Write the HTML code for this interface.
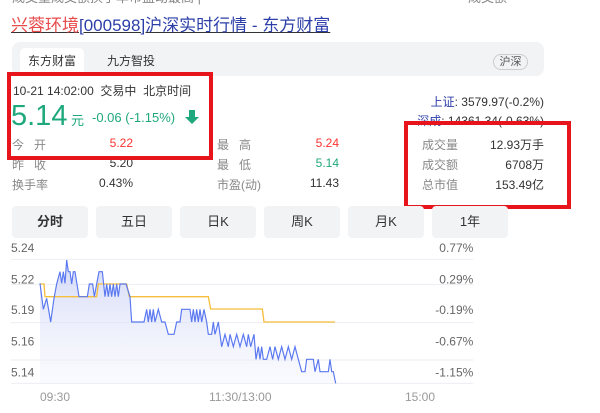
<!DOCTYPE html>
<html><head><meta charset="utf-8"><style>
*{margin:0;padding:0;box-sizing:border-box}
body{width:600px;height:413px;background:#fff;font-family:"Liberation Sans","Noto Sans CJK SC",sans-serif;position:relative;overflow:hidden;color:#333}
.a{position:absolute;white-space:nowrap}
.btn{position:absolute;top:206px;height:32px;width:76px;background:#f2f3f5;border-radius:4px;font-size:13px;text-align:center;line-height:32px;color:#333}
.box{position:absolute;border:4px solid #e8141b}
.lab{font-size:12px;color:#888}
.v{font-size:12px;text-align:right}
</style></head><body>
<div class="a" style="top:-13px;left:12px;font-size:13px;color:#888">成交量成交额换手率市盈动最高 | ·</div>
<div class="a" style="top:-13px;left:468px;font-size:13px;color:#888">成交额·</div>
<div class="a" style="top:11px;left:11px;font-size:17px;text-decoration:underline"><span style="color:#e84b4b">兴蓉环境</span><span style="color:#2c3fa8">[000598]沪深实时行情 - 东方财富</span></div>
<div class="a" style="top:42px;left:12px;width:532px;height:34px;background:#f2f3f5;border-radius:8px"></div>
<div class="a" style="top:48px;left:20px;width:64px;height:26px;background:#fff;border-radius:5px 5px 0 0;font-size:12px;line-height:26px;text-align:center">东方财富</div>
<div class="a" style="top:48px;left:107px;font-size:12px;line-height:26px">九方智投</div>
<div class="a" style="top:54px;left:493px;width:35px;height:16px;border:1px solid #ccc;border-radius:8px;font-size:11px;line-height:14px;text-align:center;color:#555">沪深</div>
<div class="a" style="top:82px;left:13px;font-size:12px">10-21 14:02:00&nbsp; 交易中&nbsp; 北京时间</div>
<div class="a" style="top:100px;left:11px;font-size:29px;color:#1fa87c;line-height:32px">5.14</div>
<div class="a" style="top:110px;left:71px;font-size:13px;color:#1fa87c">元</div>
<div class="a" style="top:110px;left:92px;font-size:13px;color:#1fa87c">-0.06 (-1.15%)</div>
<svg class="a" style="top:109px;left:185px" width="14" height="16" viewBox="0 0 14 16"><path d="M4 1h6v7h4l-7 7-7-7h4z" fill="#1fa87c"/></svg>
<div class="a lab" style="top:136px;left:12px">今&nbsp;&nbsp;&nbsp;开</div>
<div class="a lab" style="top:156px;left:12px">昨&nbsp;&nbsp;&nbsp;收</div>
<div class="a lab" style="top:176px;left:12px">换手率</div>
<div class="a v" style="top:136px;left:80px;width:53px;color:#f33">5.22</div>
<div class="a v" style="top:156px;left:80px;width:53px">5.20</div>
<div class="a v" style="top:176px;left:80px;width:53px">0.43%</div>
<div class="a lab" style="top:136px;left:217px">最&nbsp;&nbsp;&nbsp;高</div>
<div class="a lab" style="top:156px;left:217px">最&nbsp;&nbsp;&nbsp;低</div>
<div class="a lab" style="top:176px;left:217px">市盈(动)</div>
<div class="a v" style="top:136px;left:280px;width:59px;color:#f33">5.24</div>
<div class="a v" style="top:156px;left:280px;width:59px;color:#1fa87c">5.14</div>
<div class="a v" style="top:176px;left:280px;width:59px">11.43</div>
<div class="a" style="top:93px;right:56px;font-size:12px"><span style="color:#2c3fa8">上证</span>: 3579.97(-0.2%)</div>
<div class="a" style="top:112px;right:56px;font-size:12px"><span style="color:#2c3fa8">深成</span>: 14361.34(-0.63%)</div>
<div class="a lab" style="top:136px;left:422px">成交量</div>
<div class="a lab" style="top:156px;left:422px">成交额</div>
<div class="a lab" style="top:176px;left:422px">总市值</div>
<div class="a v" style="top:136px;left:470px;width:74px">12.93万手</div>
<div class="a v" style="top:156px;left:470px;width:74px">6708万</div>
<div class="a v" style="top:176px;left:470px;width:74px">153.49亿</div>
<div class="box" style="left:7px;top:72px;width:206px;height:88px"></div>
<div class="box" style="left:404px;top:121px;width:167px;height:88px"></div>
<div class="btn" style="left:12px;font-weight:bold">分时</div>
<div class="btn" style="left:96px">五日</div>
<div class="btn" style="left:180px">日K</div>
<div class="btn" style="left:264px">周K</div>
<div class="btn" style="left:348px">月K</div>
<div class="btn" style="left:432px">1年</div>
<svg class="a" style="left:0;top:200px" width="600" height="213" viewBox="0 0 1800 639">
<defs><linearGradient id="gr" x1="0" y1="0" x2="0" y2="1"><stop offset="0" stop-color="#c9d0f5" stop-opacity=".8"/><stop offset="1" stop-color="#eef0fc" stop-opacity=".3"/></linearGradient></defs>
<g stroke="#eceef2" stroke-width="3"><line x1="33" y1="178" x2="1420" y2="178"/><line x1="33" y1="253" x2="1420" y2="253"/><line x1="33" y1="368" x2="1420" y2="368"/><line x1="33" y1="480" x2="1420" y2="480"/><line x1="33" y1="550" x2="1420" y2="550"/></g>
<g font-size="36" fill="#666" font-family="Liberation Sans"><text x="33" y="156">5.24</text><text x="33" y="250">5.22</text><text x="33" y="342">5.19</text><text x="33" y="436">5.16</text><text x="33" y="530">5.14</text>
<g text-anchor="end"><text x="1420" y="156">0.77%</text><text x="1420" y="250">0.29%</text><text x="1420" y="342">-0.19%</text><text x="1420" y="436">-0.67%</text><text x="1420" y="530">-1.15%</text></g>
<g fill="#999"><text x="120" y="603">09:30</text><text x="627" y="603">11:30/13:00</text><text x="1215" y="603">15:00</text></g></g>
<polygon fill="url(#gr)" points="120,250 130,328 140,295 152,366 162,295 170,252 180,215 185,250 190,215 195,250 200,180 205,215 210,215 215,252 220,215 225,215 237,290 262,290 268,252 278,252 283,290 290,252 297,215 307,215 315,290 320,252 325,290 330,252 335,290 340,252 345,290 350,252 355,290 360,252 378,252 390,290 395,366 432,366 440,328 445,366 450,328 455,366 460,328 465,366 475,328 485,366 495,366 505,403 522,403 530,366 540,366 545,328 570,328 575,366 580,328 585,366 590,328 595,366 600,328 605,366 612,328 620,366 625,403 635,403 640,366 645,403 655,366 665,440 675,403 685,440 690,403 700,440 710,403 720,440 730,403 740,440 745,403 752,440 762,403 768,478 775,440 780,478 785,440 790,478 800,478 810,440 818,478 825,440 835,478 845,440 855,478 865,440 875,478 885,440 895,478 905,515 915,515 920,478 940,478 945,515 955,478 960,515 985,515 990,478 995,515 1000,515 1007,550 1007,552 120,552"/>
<polyline fill="none" stroke="#f5be3c" stroke-width="4" points="120,252 132,252 135,290 290,290 295,252 380,252 388,290 625,290 632,327 787,327 792,366 1005,366"/>
<polyline fill="none" stroke="#5a78f0" stroke-width="3.5" points="120,250 130,328 140,295 152,366 162,295 170,252 180,215 185,250 190,215 195,250 200,180 205,215 210,215 215,252 220,215 225,215 237,290 262,290 268,252 278,252 283,290 290,252 297,215 307,215 315,290 320,252 325,290 330,252 335,290 340,252 345,290 350,252 355,290 360,252 378,252 390,290 395,366 432,366 440,328 445,366 450,328 455,366 460,328 465,366 475,328 485,366 495,366 505,403 522,403 530,366 540,366 545,328 570,328 575,366 580,328 585,366 590,328 595,366 600,328 605,366 612,328 620,366 625,403 635,403 640,366 645,403 655,366 665,440 675,403 685,440 690,403 700,440 710,403 720,440 730,403 740,440 745,403 752,440 762,403 768,478 775,440 780,478 785,440 790,478 800,478 810,440 818,478 825,440 835,478 845,440 855,478 865,440 875,478 885,440 895,478 905,515 915,515 920,478 940,478 945,515 955,478 960,515 985,515 990,478 995,515 1000,515 1007,550"/>
</svg>
</body></html>
